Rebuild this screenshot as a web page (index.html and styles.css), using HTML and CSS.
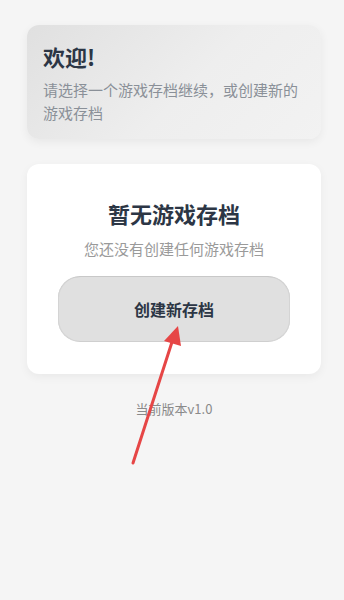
FILE: index.html
```html
<!DOCTYPE html>
<html lang="zh">
<head>
<meta charset="utf-8">
<link rel="stylesheet" href="styles.css">
</head>
<body>
<div class="page">
  <section class="welcome">
    <h1 class="welcome-title">欢迎!</h1>
    <p class="welcome-text">请选择一个游戏存档继续，或创建新的游戏存档</p>
  </section>
  <section class="empty">
    <h2 class="empty-title">暂无游戏存档</h2>
    <p class="empty-text">您还没有创建任何游戏存档</p>
    <button class="create-btn">创建新存档</button>
  </section>
  <p class="version">当前版本v1.0</p>
</div>
<svg class="arrow" width="344" height="600" viewBox="0 0 344 600">
  <line x1="133" y1="463" x2="172" y2="342" stroke="#e64646" stroke-width="3" stroke-linecap="round"/>
  <polygon points="178,326 181,346 164,341" fill="#e64646"/>
</svg>
</body>
</html>
```
FILE: styles.css
```css
html, body {
  margin: 0;
  padding: 0;
}
body {
  background: #f5f5f5;
  font-family: "Noto Sans CJK SC", "Noto Sans", sans-serif;
  width: 344px;
  height: 600px;
  overflow: hidden;
  position: relative;
}
.page {
  padding: 25px 23px 0 27px;
  display: flex;
  flex-direction: column;
}
.welcome {
  background: linear-gradient(135deg, #e0e0e0 0%, #eeeeee 55%, #f2f2f2 100%);
  border-radius: 12px;
  padding: 14px 16px 14px 16px;
  box-shadow: 0 3px 10px rgba(0,0,0,0.06);
  height: 86px;
}
.welcome-title {
  margin: 0;
  font-size: 22px;
  line-height: 34px;
  font-weight: 700;
  color: #2c3645;
}
.welcome-text {
  margin: 5px 0 0;
  font-size: 15px;
  line-height: 23px;
  color: #8a9098;
}
.empty {
  margin-top: 25px;
  background: #ffffff;
  border-radius: 12px;
  box-shadow: 0 3px 10px rgba(0,0,0,0.05);
  display: flex;
  flex-direction: column;
  align-items: center;
  padding: 31px 31px 32px;
}
.empty-title {
  margin: 0;
  font-size: 22px;
  line-height: 36px;
  font-weight: 700;
  color: #2c3645;
}
.empty-text {
  margin: 6px 0 0;
  font-size: 15px;
  line-height: 24px;
  color: #9a9a9a;
}
.create-btn {
  margin-top: 15px;
  width: 232px;
  height: 66px;
  border-radius: 22px;
  background: #e0e0e0;
  border: none;
  border-top: 1px solid #c8c8c8;
  border-bottom: 1px solid #cfcfcf;
  box-shadow: inset 1px 0 0 #d4d4d4, inset -1px 0 0 #d4d4d4;
  font-family: "Noto Sans CJK SC", sans-serif;
  font-size: 16px;
  font-weight: 700;
  color: #2c3645;
  padding: 0;
}
.version {
  margin: 25px 0 0;
  text-align: center;
  font-size: 13px;
  line-height: 20px;
  color: #8a8a8a;
}
.arrow {
  position: absolute;
  left: 0;
  top: 0;
  pointer-events: none;
}
```
